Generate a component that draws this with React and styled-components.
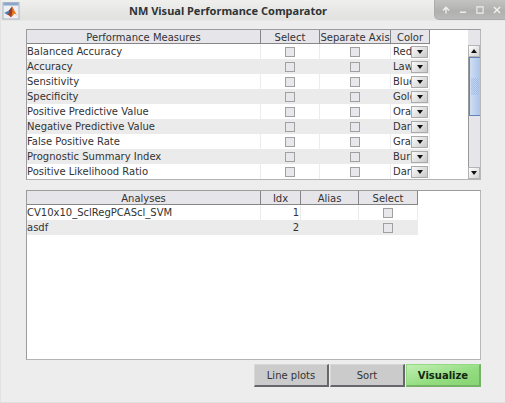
import React from "react";
import styled, { createGlobalStyle } from "styled-components";

const GlobalStyle = createGlobalStyle`
  * { box-sizing: border-box; }
  body {
    margin: 0;
    background: #ededed;
    color: #333;
    font: 10px/14px "DejaVu Sans", sans-serif;
  }
  button, select, input { font: inherit; color: inherit; margin: 0; }
`;

const Window = styled.div`
  min-height: 100vh;
  display: flex;
  flex-direction: column;
  border-left: 1px solid #e2e2e2;
  border-bottom: 1px solid #dedede;
`;

const TitleBar = styled.header`
  display: flex;
  height: 21px;
  background: linear-gradient(#efefee, #e1e1df 90%, #e9e9e8);
`;

const AppIcon = styled.svg`
  width: 18px;
  height: 18px;
  margin: 2px 0 0 1px;
  flex: none;
`;

const Title = styled.h1`
  flex: 1;
  margin: 0 0 0 2px;
  font-family: "Noto Sans", sans-serif;
  font-size: 11px;
  line-height: 22px;
  font-weight: bold;
  text-align: center;
  white-space: nowrap;
  color: #2e3436;
`;

const WindowControls = styled.div`
  display: flex;
  align-items: center;
  width: 71px;
  height: 20px;
  padding-left: 3px;
  background: linear-gradient(#c3c3c2, #b0b0af 60%, #bababa);
  border-left: 1px solid #adadad;
  border-bottom: 1px solid #acacac;
  border-bottom-left-radius: 5px;
`;

const WindowButton = styled.button`
  width: 17px;
  height: 18px;
  padding: 0;
  border: 0;
  background: none;
  display: grid;
  place-items: center;

  svg {
    width: 8px;
    height: 8px;
    fill: none;
    stroke: #f0f0f0;
    stroke-width: 1.6;
  }
`;

const Content = styled.main`
  flex: 1;
  display: flex;
  flex-direction: column;
  padding: 8px 24px 15px 25px;
`;

const Panel = styled.section`
  display: flex;
  justify-content: space-between;
  flex: ${(p) => (p.$grow ? 1 : "none")};
  margin-bottom: ${(p) => (p.$grow ? 4 : 10)}px;
  background: #fff;
  border: 1px solid #9c9c9c;
  border-right-color: #b8b8b8;
  border-bottom-color: #b4b4b4;
`;

const Table = styled.table`
  table-layout: fixed;
  border-collapse: separate;
  border-spacing: 0;
  width: ${(p) => p.$width}px;
  align-self: flex-start;
`;

const Col = styled.col`
  width: ${(p) => p.$width}px;
`;

const HeadCell = styled.th`
  height: 14px;
  padding: 3px 0 0;
  background: #e6e5ea;
  border-right: 1px solid #868686;
  border-bottom: 1px solid #868686;
  font-weight: normal;
  line-height: 10px;
  white-space: nowrap;
`;

const Row = styled.tr`
  &:nth-child(even) { background: #ebebeb; }
`;

const Cell = styled.td`
  height: 15px;
  padding: 0 1px 0 0;
  line-height: 14px;
  vertical-align: middle;
  white-space: nowrap;
  text-align: ${(p) => p.$align || "left"};
  border-right: 1px solid #ececec;
`;

const Check = styled.input.attrs({ type: "checkbox" })`
  appearance: none;
  display: block;
  width: 10px;
  height: 10px;
  margin: 0 auto;
  background: #e8e7eb;
  border: 1px solid #a0a0a0;

  &:checked { background: #555; }
`;

const Picker = styled.div`
  position: relative;
  width: 35px;
  height: 14px;
  margin-left: 2px;
`;

const PickerSelect = styled.select`
  appearance: none;
  display: block;
  width: 35px;
  height: 14px;
  padding: 0 16px 0 0;
  border: 0;
  outline: 0;
  background: transparent;
  line-height: 14px;
`;

const PickerArrow = styled.span`
  position: absolute;
  top: 1px;
  right: 0;
  width: 17px;
  height: 12px;
  display: grid;
  place-items: center;
  pointer-events: none;
  background: linear-gradient(135deg, #fafafa, #c9c9c9);
  border: 1px solid #aaa;
`;

const ScrollBar = styled.div`
  display: flex;
  flex-direction: column;
  width: 12px;
  padding-top: 15px;
  background: #e6e5ea;
`;

const ScrollButton = styled.button`
  display: grid;
  place-items: center;
  width: 12px;
  height: 12px;
  padding: 0;
  background: linear-gradient(135deg, #fff, #d2d2d2);
  border: 1px solid #b4b4b4;
`;

const ScrollTrack = styled.div`
  flex: 1;
  border-left: 1px solid #989898;
`;

const ScrollThumb = styled.div`
  height: 59px;
  display: grid;
  place-items: center;
  border: 1px solid #6485bc;
  border-right: 0;
  background: linear-gradient(90deg, #cfdff5, #adc5e8);

  &::before {
    content: "";
    width: 8px;
    height: 17px;
    background: conic-gradient(#bdd2ee 25%, #8eacd9 0 50%, #bdd2ee 0 75%, #8eacd9 0) 0 0 / 2px 2px;
    opacity: 0.5;
  }
`;

const Actions = styled.footer`
  display: flex;
  justify-content: flex-end;
  gap: 1px;
`;

const ActionButton = styled.button`
  width: 75px;
  height: 23px;
  padding: 1px 0 0;
  background: #cbcbcb;
  border: 1px solid #d8d8d8;
  border-right: 2px solid #66666b;
  border-bottom: 2px solid #66666b;
`;

const PrimaryButton = styled(ActionButton)`
  color: #142810;
  font-weight: bold;
  background: linear-gradient(165deg, #c0efb3, #93dd80 60%, #88d374);
  border: 1px solid #94da83;
  border-right: 2px solid #75b265;
  border-bottom: 2px solid #75b265;
`;

const Arrow = ({ up }) => (
  <svg width="6" height="4" viewBox="0 0 6 4" fill="#111" aria-hidden="true">
    <path d={up ? "M0 4 3 0 6 4Z" : "M0 0H6L3 4Z"} />
  </svg>
);

const MatlabIcon = () => (
  <AppIcon viewBox="0 0 18 18" aria-hidden="true">
    <rect x="1" y="0.5" width="16" height="16.5" fill="#eeeff2" stroke="#aab3c3" />
    <path d="M1.5 1H16.5V3.5H1.5Z" fill="#89a6cb" />
    <path d="M2.3 10.7 6 9 8 10.6 5.4 13Z" fill="#4c7fb8" />
    <path d="M6 9C7.5 8.6 8.2 6.3 10 4.5L8 10.6Z" fill="#334778" />
    <path d="M10 4.5C8.8 6.3 8.1 9.5 5.4 13 7 12.5 8 15 9 15.2 10.6 14.6 11 11.7 12.6 11.8Z" fill="#a43b20" />
    <path d="M10 4.5C11.6 5.5 13 11.3 15.8 14 14 12.3 13 11.6 12.6 11.8 11 11.7 10.6 14.6 9 15.2 10.5 11.5 10.6 7.5 10 4.5Z" fill="#e87822" />
  </AppIcon>
);

const windowActions = [
  ["Keep above", <path d="M1 5 4.5 1.5 8 5M4.5 2V8.5" />],
  ["Minimize", <path d="M1 7H8" />],
  ["Maximize", <path d="M1 1H8V8H1Z" strokeWidth="1.2" />],
  ["Close", <path d="M1 1 8 8M8 1 1 8" />],
];

const measures = [
  ["Balanced Accuracy", "Red"],
  ["Accuracy", "LawnGreen"],
  ["Sensitivity", "Blue"],
  ["Specificity", "Gold"],
  ["Positive Predictive Value", "Orange"],
  ["Negative Predictive Value", "DarkBlue"],
  ["False Positive Rate", "Gray"],
  ["Prognostic Summary Index", "Burlywood"],
  ["Positive Likelihood Ratio", "DarkGreen"],
];

const colors = measures.map(([, color]) => color);

const analyses = [
  ["CV10x10_SclRegPCAScl_SVM", 1],
  ["asdf", 2],
];

function Grid({ widths, heads, children }) {
  return (
    <Table $width={widths.reduce((a, b) => a + b, 0)}>
      <colgroup>
        {widths.map((w, i) => <Col key={i} $width={w} />)}
      </colgroup>
      <thead>
        <tr>{heads.map((h) => <HeadCell key={h} scope="col">{h}</HeadCell>)}</tr>
      </thead>
      <tbody>{children}</tbody>
    </Table>
  );
}

export default function App() {
  return (
    <>
      <GlobalStyle />
      <Window>
        <TitleBar>
          <MatlabIcon />
          <Title>NM Visual Performance Comparator</Title>
          <WindowControls>
            {windowActions.map(([label, shape]) => (
              <WindowButton key={label} type="button" aria-label={label}>
                <svg viewBox="0 0 9 9">{shape}</svg>
              </WindowButton>
            ))}
          </WindowControls>
        </TitleBar>
        <Content>
          <Panel>
            <Grid
              widths={[234, 59, 71, 39]}
              heads={["Performance Measures", "Select", "Separate Axis", "Color"]}
            >
              {measures.map(([name, color]) => (
                <Row key={name}>
                  <Cell>{name}</Cell>
                  <Cell><Check aria-label={`Select ${name}`} /></Cell>
                  <Cell><Check aria-label={`Separate axis for ${name}`} /></Cell>
                  <Cell>
                    <Picker>
                      <PickerSelect aria-label={`Color of ${name}`} defaultValue={color}>
                        {colors.map((c) => <option key={c}>{c}</option>)}
                      </PickerSelect>
                      <PickerArrow><Arrow /></PickerArrow>
                    </Picker>
                  </Cell>
                </Row>
              ))}
            </Grid>
            <ScrollBar>
              <ScrollButton type="button" aria-label="Scroll up"><Arrow up /></ScrollButton>
              <ScrollTrack><ScrollThumb /></ScrollTrack>
              <ScrollButton type="button" aria-label="Scroll down"><Arrow /></ScrollButton>
            </ScrollBar>
          </Panel>
          <Panel $grow>
            <Grid widths={[234, 40, 58, 59]} heads={["Analyses", "Idx", "Alias", "Select"]}>
              {analyses.map(([name, idx]) => (
                <Row key={name}>
                  <Cell>{name}</Cell>
                  <Cell $align="right">{idx}</Cell>
                  <Cell />
                  <Cell><Check aria-label={`Select ${name}`} /></Cell>
                </Row>
              ))}
            </Grid>
          </Panel>
          <Actions>
            <ActionButton type="button">Line plots</ActionButton>
            <ActionButton type="button">Sort</ActionButton>
            <PrimaryButton type="button">Visualize</PrimaryButton>
          </Actions>
        </Content>
      </Window>
    </>
  );
}
